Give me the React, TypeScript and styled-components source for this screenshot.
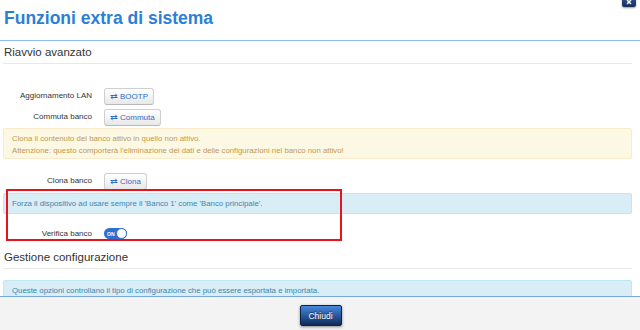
import styled, { createGlobalStyle } from "styled-components";

const GlobalStyle = createGlobalStyle`
  html, body {
    margin: 0;
    padding: 0;
    background: #fff;
  }
  body {
    font-family: "Liberation Sans", Arial, sans-serif;
    color: #333;
  }
`;

type FormRowProps = {
  label: string;
  children: React.ReactNode;
  $top?: number;
};

const ExchangeIcon = () => (
  <svg width="8" height="7" viewBox="0 0 16 14" aria-hidden="true">
    <path d="M1 4h10V1l4 4-4 4V6H1z" fill="currentColor" />
    <path d="M15 10H5v3l-4-4 4-4v3h10z" fill="currentColor" />
  </svg>
);

const CloseIcon = () => (
  <svg width="6" height="6" viewBox="0 0 6 6" aria-hidden="true">
    <path d="M1 1l4 4M5 1L1 5" stroke="#fff" strokeWidth="1.4" />
  </svg>
);

const FormRow = ({ label, children, $top }: FormRowProps) => (
  <Row $top={$top}>
    <Label>{label}</Label>
    <div>{children}</div>
  </Row>
);

const App = () => {
  return (
    <>
      <GlobalStyle />
      <Modal>
        <Header>
          <Title>Funzioni extra di sistema</Title>
          <CloseButton aria-label="Chiudi">
            <CloseIcon />
          </CloseButton>
        </Header>

        <Body>
          <SectionTitle $top={4}>Riavvio avanzato</SectionTitle>

          <FormRow label="Aggiornamento LAN" $top={22}>
            <ActionButton>
              <ExchangeIcon /> BOOTP
            </ActionButton>
          </FormRow>
          <FormRow label="Commuta banco" $top={4}>
            <ActionButton>
              <ExchangeIcon /> Commuta
            </ActionButton>
          </FormRow>

          <Alert $kind="warning">
            Clona il contenuto del banco attivo in quello non attivo.
            <br />
            Attenzione: questo comporterà l'eliminazione dei dati e delle configurazioni nel banco non attivo!
          </Alert>

          <FormRow label="Clona banco" $top={12}>
            <ActionButton>
              <ExchangeIcon /> Clona
            </ActionButton>
          </FormRow>

          <Alert $kind="info">
            Forza il dispositivo ad usare sempre il 'Banco 1' come 'Banco principale'.
          </Alert>

          <FormRow label="Verifica banco" $top={10}>
            <Switch>
              <SwitchText>ON</SwitchText>
              <Knob />
            </Switch>
          </FormRow>

          <SectionTitle $top={9}>Gestione configurazione</SectionTitle>

          <Alert $kind="info" $top={11}>
            Queste opzioni controllano il tipo di configurazione che può essere esportata e importata.
          </Alert>

          <Highlight />
        </Body>

        <Footer>
          <PrimaryButton>Chiudi</PrimaryButton>
        </Footer>
      </Modal>
    </>
  );
};

//  --- Layout ---
const Modal = styled.div`
  height: 330px;
  display: flex;
  flex-direction: column;
  overflow: hidden;
  background: #fff;
`;

const Header = styled.header`
  position: relative;
  box-sizing: border-box;
  height: 41px;
  padding: 8px 4px 0;
  border-bottom: 1px solid #8dbdf0;
`;

const Title = styled.h1`
  margin: 0;
  font-size: 17.5px;
  line-height: 20px;
  font-weight: bold;
  color: #2b7fd9;
`;

const CloseButton = styled.span`
  position: absolute;
  top: -8px;
  right: 4px;
  width: 14px;
  height: 15px;
  display: flex;
  align-items: flex-end;
  justify-content: center;
  padding-bottom: 2px;
  box-sizing: border-box;
  border-radius: 2px;
  background: linear-gradient(#3a6fb8, #152d57);
  box-shadow: 0 1px 2px rgba(0, 0, 0, 0.4);
`;

const Body = styled.main`
  position: relative;
  flex: 1;
  overflow: hidden;
  padding: 0 8px 0 3px;
`;

const SectionTitle = styled.h2<{ $top: number }>`
  margin: ${(p) => p.$top}px 0 0 0;
  padding: 0 0 4px 1px;
  font-size: 11.5px;
  line-height: 14px;
  font-weight: normal;
  color: #333;
  border-bottom: 1px solid #e8e8e8;
`;

const Row = styled.div<{ $top?: number }>`
  display: grid;
  grid-template-columns: 89px auto;
  column-gap: 12px;
  align-items: center;
  height: 17px;
  margin-top: ${(p) => p.$top ?? 0}px;
`;

const Label = styled.span`
  text-align: right;
  font-size: 8px;
  color: #333;
`;

//  --- Alerts ---
const Alert = styled.div<{ $kind: "warning" | "info"; $top?: number }>`
  margin-top: ${(p) => p.$top ?? (p.$kind === "warning" ? 4 : 5)}px;
  padding: ${(p) => (p.$kind === "warning" ? "4px 8px 2px" : "4px 8px")};
  font-size: 7.8px;
  line-height: ${(p) => (p.$kind === "warning" ? "11.5px" : "11px")};
  border-radius: 2px;
  background: ${(p) => (p.$kind === "warning" ? "#fcf8e3" : "#d9edf7")};
  border: 1px solid ${(p) => (p.$kind === "warning" ? "#faebcc" : "#bce8f1")};
  color: ${(p) => (p.$kind === "warning" ? "#c09853" : "#3a87ad")};
`;

const Highlight = styled.div`
  position: absolute;
  left: 6px;
  top: 148px;
  width: 332px;
  height: 48px;
  border: 2px solid #e8141c;
  pointer-events: none;
`;

//  --- Controls ---
const ActionButton = styled.button`
  display: inline-flex;
  align-items: center;
  gap: 2px;
  height: 17px;
  padding: 0 5px;
  font-family: inherit;
  font-size: 8px;
  color: #2f6fc8;
  background: linear-gradient(#ffffff, #e8e8e8);
  border: 1px solid #cfcfcf;
  border-bottom-color: #b9b9b9;
  border-radius: 3px;
  box-shadow: inset 0 1px 0 rgba(255, 255, 255, 0.6);
`;

const Switch = styled.span`
  position: relative;
  display: inline-flex;
  align-items: center;
  width: 23px;
  height: 11px;
  vertical-align: middle;
  border-radius: 6px;
  background: #2d6fd2;
`;

const SwitchText = styled.span`
  padding-left: 3px;
  font-size: 5px;
  font-weight: bold;
  color: #fff;
`;

const Knob = styled.span`
  position: absolute;
  right: 0;
  top: 0;
  box-sizing: border-box;
  width: 11px;
  height: 11px;
  border-radius: 50%;
  background: #fff;
  border: 1px solid #2d6fd2;
`;

//  --- Footer ---
const Footer = styled.footer`
  box-sizing: border-box;
  height: 34px;
  display: flex;
  justify-content: center;
  align-items: flex-start;
  padding-top: 8px;
  padding-left: 1px;
  background: #f3f3f3;
  border-top: 1px solid #7aa7dc;
`;

const PrimaryButton = styled.button`
  width: 42px;
  height: 21px;
  padding: 0;
  font-family: inherit;
  font-size: 8.5px;
  color: #fff;
  text-shadow: 0 -1px 0 rgba(0, 0, 0, 0.5);
  background: linear-gradient(#4589de, #0e2a58);
  border: 1px solid #0b2246;
  border-radius: 2px;
  box-shadow: 0 1px 3px rgba(0, 0, 0, 0.45);
`;

export default App;
